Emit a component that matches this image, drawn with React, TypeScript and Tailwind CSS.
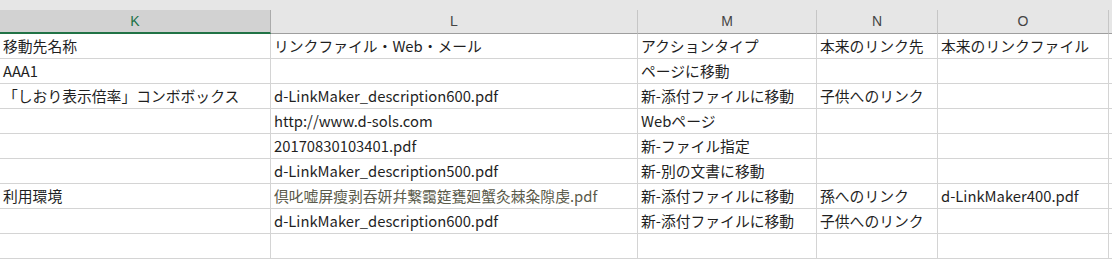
const COLS = [
  { key: "K", w: "w-[271px]" },
  { key: "L", w: "w-[367px]" },
  { key: "M", w: "w-[179px]" },
  { key: "N", w: "w-[121px]" },
  { key: "O", w: "w-[171px]" },
];

const ROWS: string[][] = [
  ["移動先名称", "リンクファイル・Web・メール", "アクションタイプ", "本来のリンク先", "本来のリンクファイル"],
  ["AAA1", "", "ページに移動", "", ""],
  ["「しおり表示倍率」コンボボックス", "d-LinkMaker_description600.pdf", "新-添付ファイルに移動", "子供へのリンク", ""],
  ["", "http://www.d-sols.com", "Webページ", "", ""],
  ["", "20170830103401.pdf", "新-ファイル指定", "", ""],
  ["", "d-LinkMaker_description500.pdf", "新-別の文書に移動", "", ""],
  ["利用環境", "倶叱嘘屏瘦剥吞妍幷繋靄筵甕廻蟹灸棘粂隙虔.pdf", "新-添付ファイルに移動", "孫へのリンク", "d-LinkMaker400.pdf"],
  ["", "d-LinkMaker_description600.pdf", "新-添付ファイルに移動", "子供へのリンク", ""],
  ["", "", "", "", ""],
];

export default function App() {
  return (
    <div className="h-[261px] w-[1112px] overflow-hidden bg-white font-['Noto_Sans_CJK_JP',sans-serif] text-[14.8px] text-[#1f1f1f]">
      <div className="h-[10px] bg-[#e6e6e6]" />
      <div className="flex h-[24px] bg-[#e6e6e6]">
        {COLS.map((c) => (
          <div
            key={c.key}
            className={
              c.key === "K"
                ? `${c.w} flex shrink-0 items-center justify-center border-r border-b-2 border-r-[#ababab] border-b-[#217346] bg-[#d2d2d2] text-[#217346]`
                : `${c.w} flex shrink-0 items-center justify-center border-r border-b border-r-[#c6c6c6] border-b-[#9e9e9e] text-[#444]`
            }
          >
            <span className="font-['Liberation_Sans',sans-serif] text-[14px]">{c.key}</span>
          </div>
        ))}
        <div className="flex-1 border-b border-b-[#9e9e9e]" />
      </div>
      {ROWS.map((row, i) => (
        <div key={i} className="flex h-[25px]">
          {row.map((cell, j) => (
            <div
              key={j}
              className={`${COLS[j].w} flex shrink-0 items-center overflow-hidden whitespace-nowrap border-r border-b border-[#d4d4d4] pl-[3px] ${
                i === 6 && j === 1 ? "text-[#5a5a4a]" : ""
              }`}
            >
              {cell}
            </div>
          ))}
          <div className="flex-1 border-b border-[#d4d4d4]" />
        </div>
      ))}
    </div>
  );
}
